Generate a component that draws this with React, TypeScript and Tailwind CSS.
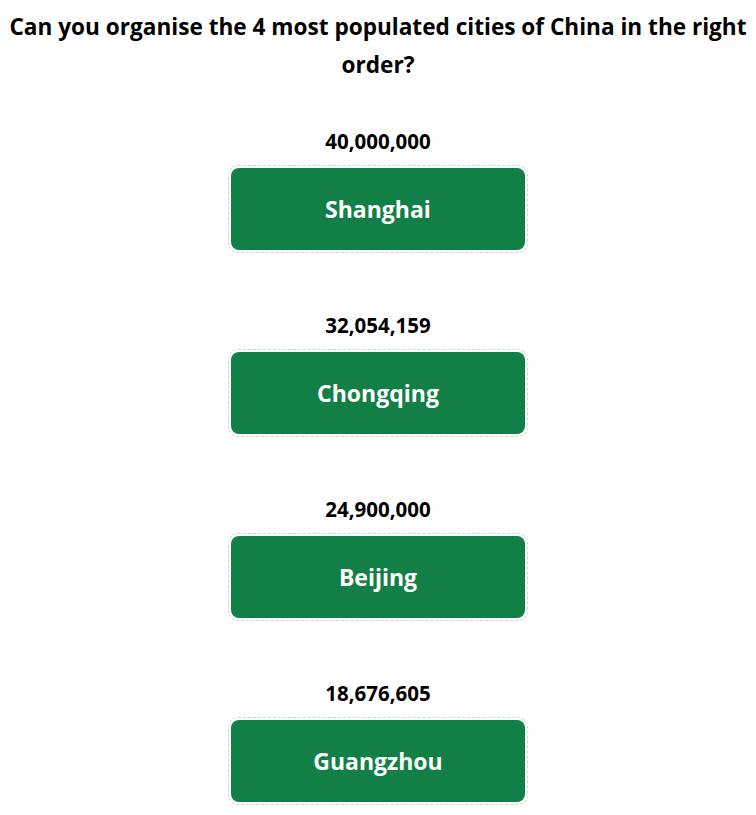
const cities = [
  { population: "40,000,000", name: "Shanghai" },
  { population: "32,054,159", name: "Chongqing" },
  { population: "24,900,000", name: "Beijing" },
  { population: "18,676,605", name: "Guangzhou" },
];

export default function App() {
  return (
    <div
      className="min-h-screen bg-white pt-2 text-black"
      style={{ fontFamily: '"Open Sans", "Noto Sans", sans-serif' }}
    >
      <h1 className="text-center text-[22.6px] font-bold leading-[38px]">
        Can you organise the 4 most populated cities of China in the right order?
      </h1>

      <div className="mt-[45px] flex flex-col items-center gap-[60px]">
        {cities.map((c) => (
          <div key={c.name} className="flex flex-col items-center">
            <div className="text-[20.5px] font-bold leading-[24px]">{c.population}</div>
            <div className="mt-3 rounded-[10px] border border-dashed border-[#c9d9ce] p-[2px]">
              <div className="flex h-[82px] w-[294px] items-center justify-center rounded-[8px] bg-[#128046] text-[23px] font-bold text-white">
                {c.name}
              </div>
            </div>
          </div>
        ))}
      </div>
    </div>
  );
}
